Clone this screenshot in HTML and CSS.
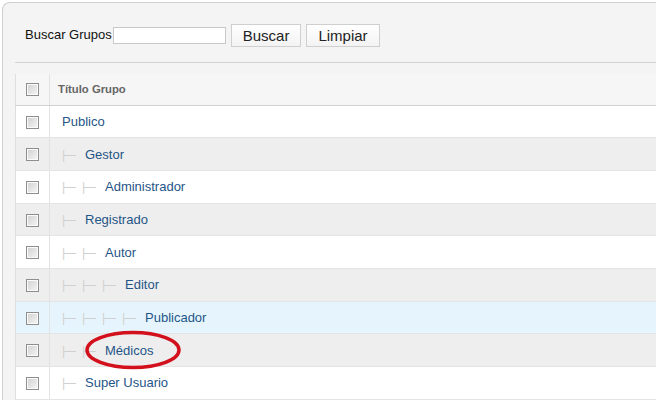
FILE: index.html
```
<!DOCTYPE html>
<html lang="es">
<head>
    <meta charset="UTF-8">
    <title>Grupos</title>
    <link rel="stylesheet" href="styles.css">
</head>
<body>
    <div class="panel">
        <form class="search">
            <label for="q">Buscar Grupos</label><input type="text" id="q" class="search-input"><button type="button" class="btn">Buscar</button><button type="button" class="btn">Limpiar</button>
        </form>

        <div class="list-wrap">
            <table class="adminlist">
                <thead>
                    <tr>
                        <th class="col-check"><span class="cb"></span></th>
                        <th class="col-title">Título Grupo</th>
                    </tr>
                </thead>
                <tbody>
                    <tr class="row0">
                        <td class="col-check"><span class="cb"></span></td>
                        <td><a href="#">Publico</a></td>
                    </tr>
                    <tr class="row1">
                        <td class="col-check"><span class="cb"></span></td>
                        <td><span class="gi">|&mdash;</span><a href="#">Gestor</a></td>
                    </tr>
                    <tr class="row0">
                        <td class="col-check"><span class="cb"></span></td>
                        <td><span class="gi">|&mdash;</span><span class="gi">|&mdash;</span><a href="#">Administrador</a></td>
                    </tr>
                    <tr class="row1">
                        <td class="col-check"><span class="cb"></span></td>
                        <td><span class="gi">|&mdash;</span><a href="#">Registrado</a></td>
                    </tr>
                    <tr class="row0">
                        <td class="col-check"><span class="cb"></span></td>
                        <td><span class="gi">|&mdash;</span><span class="gi">|&mdash;</span><a href="#">Autor</a></td>
                    </tr>
                    <tr class="row1">
                        <td class="col-check"><span class="cb"></span></td>
                        <td><span class="gi">|&mdash;</span><span class="gi">|&mdash;</span><span class="gi">|&mdash;</span><a href="#">Editor</a></td>
                    </tr>
                    <tr class="row0 hover">
                        <td class="col-check"><span class="cb"></span></td>
                        <td><span class="gi">|&mdash;</span><span class="gi">|&mdash;</span><span class="gi">|&mdash;</span><span class="gi">|&mdash;</span><a href="#">Publicador</a></td>
                    </tr>
                    <tr class="row1">
                        <td class="col-check"><span class="cb"></span></td>
                        <td class="marked"><span class="gi">|&mdash;</span><span class="gi">|&mdash;</span><a href="#">Médicos</a>
                            <svg class="circle" width="100" height="42" viewBox="0 0 100 42"><ellipse cx="48" cy="20" rx="46" ry="17.5" fill="none" stroke="#d3111c" stroke-width="3.5"/></svg>
                        </td>
                    </tr>
                    <tr class="row0">
                        <td class="col-check"><span class="cb"></span></td>
                        <td><span class="gi">|&mdash;</span><a href="#">Super Usuario</a></td>
                    </tr>
                </tbody>
            </table>
        </div>
    </div>
</body>
</html>
```

FILE: styles.css
```
* {
    box-sizing: border-box;
}

html,
body {
    height: 401px;
    overflow: hidden;
}

body {
    margin: 0;
    background: #fff;
    font-family: "Liberation Sans", Arial, sans-serif;
    font-size: 12px;
    color: #333;
}

.panel {
    margin: 2px 0 0 2px;
    background: #f4f4f4;
    border-left: 1px solid #cfcfcf;
    border-top: 1px solid #cfcfcf;
    border-radius: 8px 0 0 0;
    padding-left: 12px;
}

.search {
    height: 60px;
    padding: 19px 0 0 10px;
    border-bottom: 1px solid #d4d4d4;
    font-size: 13px;
    color: #111;
}

.search-input {
    width: 113px;
    height: 17px;
    margin: 0 5px 0 1px;
    border: 1px solid #c8c8c8;
    background: #fff;
    font-size: 12px;
    vertical-align: baseline;
}

.btn {
    height: 23px;
    padding: 0 11px;
    margin-right: 5px;
    border: 1px solid #cfcfcf;
    background: linear-gradient(#fff, #f3f3f3);
    font-family: "Liberation Sans", Arial, sans-serif;
    font-size: 15px;
    color: #222;
    position: relative;
    top: 2px;
}

.list-wrap {
    padding-top: 11px;
}

.adminlist {
    width: 100%;
    border-collapse: collapse;
    border-left: 1px solid #dedede;
    border-bottom: 1px solid #9d9d9d;
}

.adminlist th {
    height: 31px;
    background: #f6f6f6;
    border-bottom: 1px solid #d2d2d2;
    text-align: left;
    font-weight: bold;
    color: #666;
    font-size: 11.3px;
    padding: 0;
}

.adminlist td {
    height: 32.7px;
    padding: 0;
    border-top: 1px solid #fafafa;
    border-bottom: 1px solid #e4e4e4;
}

.adminlist .col-check {
    width: 34px;
    text-align: center;
    border-right: 1px solid #e2e2e2;
}

.adminlist .col-title {
    padding-left: 8px;
}

.adminlist td + td {
    padding-left: 12px;
}

.row0 td {
    background: #fff;
}

.row1 td {
    background: #eee;
}

.row0.hover td {
    background: #e6f5fd;
}

.cb {
    display: inline-block;
    width: 13px;
    height: 13px;
    border: 1px solid #8e8e8e;
    background: linear-gradient(135deg, #d0d0d0, #f6f6f6);
    box-shadow: inset 0 0 0 1px #fafafa;
    vertical-align: middle;
}

.adminlist a {
    color: #1f5587;
    text-decoration: none;
    font-size: 13px;
}

.gi {
    display: inline-block;
    width: 20px;
    color: #d0d0d0;
    font-size: 12px;
    letter-spacing: -1px;
}

.gi + a {
    margin-left: 3px;
}

.marked {
    position: relative;
}

.circle {
    position: absolute;
    left: 35px;
    top: -4px;
}
```
